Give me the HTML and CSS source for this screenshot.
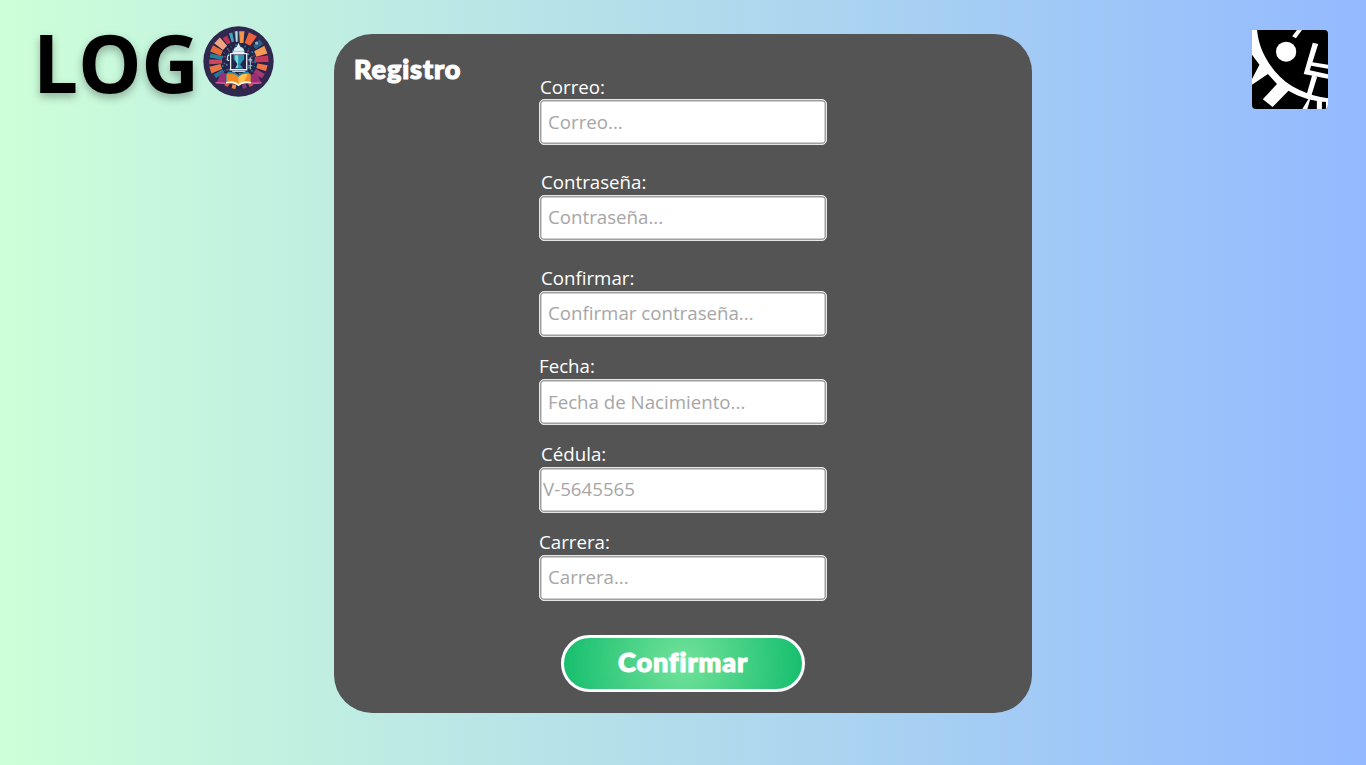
FILE: index.html
```html
<!DOCTYPE html>
<html lang="es">
<head>
<meta charset="utf-8">
<title>Registro</title>
<link rel="stylesheet" href="styles.css">
</head>
<body>
<header class="brand">
  <span class="brand-text">LOG</span>
  <svg class="emblem" viewBox="0 0 216 216" aria-hidden="true">
    <circle cx="108" cy="108" r="107" fill="#30284f"/>
    <circle cx="108" cy="108" r="86" fill="#242448"/>
    <g transform="translate(108 106)">
      <path d="M-12-90H-1V-58H-9z" fill="#3d9dba"/>
      <path d="M2-90H18L15-54H4z" fill="#f4934a"/>
      <path d="M-9-90H-4V-58H-7z" fill="#bce0df"/>
      <path d="M-13-92H14L10-57H-9z" fill="#eb633e" transform="rotate(28)"/>
      <path d="M-9-91H9L7-63H-7z" fill="#2b5c82" transform="rotate(50)"/>
      <path d="M-13-90H12L9-55H-9z" fill="#f39a56" transform="rotate(68)"/>
      <path d="M-10-91H10L8-50H-8z" fill="#c9365c" transform="rotate(86)"/>
      <path d="M-10-89H9L7-58H-7z" fill="#ef7547" transform="rotate(105)"/>
      <path d="M-9-89H8L7-58H-7z" fill="#a83773" transform="rotate(122)"/>
      <path d="M-7-88H4L2-60H-5z" fill="#49a0b5" transform="rotate(-15)"/>
      <path d="M-9-84H7L6-60H-6z" fill="#bd3456" transform="rotate(-29)"/>
      <path d="M-13-90H12L9-57H-9z" fill="#f0a57f" transform="rotate(-46)"/>
      <path d="M-11-90H10L8-56H-9z" fill="#e96b3c" transform="rotate(-65)"/>
      <path d="M-7-88H6L5-50H-6z" fill="#26809c" transform="rotate(-79)"/>
      <path d="M-7-89H7L6-50H-6z" fill="#cf4660" transform="rotate(-92)"/>
      <path d="M-11-90H10L8-55H-8z" fill="#e87543" transform="rotate(-108)"/>
      <path d="M-7-86H6L5-55H-6z" fill="#27769b" transform="rotate(-123)"/>
      <path d="M-6-86H6V-73H-6z" fill="#e65443" transform="rotate(153)"/>
      <path d="M-6-86H6V-73H-6z" fill="#8d3275" transform="rotate(167)"/>
      <path d="M-6-86H6V-73H-6z" fill="#f18a39" transform="rotate(190)"/>
      <path d="M-6-86H6V-73H-6z" fill="#e65443" transform="rotate(206)"/>
    </g>
    <g fill="none" stroke-width="5">
      <circle cx="108" cy="108" r="50" stroke="#287c9c" stroke-dasharray="5 9 2 12"/>
      <circle cx="108" cy="108" r="43" stroke="#b54669" stroke-dasharray="4 17"/>
      <circle cx="108" cy="108" r="37" stroke="#3b82a0" stroke-dasharray="6 11"/>
    </g>
    <path d="M56 141l-16 33 46 3V150zM163 141l14 32-40 5v-25z" fill="#9b2e76"/>
    <path d="M84 84v49h49V84z" fill="#242448" stroke="#e7f0f8" stroke-width="4"/>
    <path d="M80 90h-5v15h5M89 138h38" fill="none" stroke="#e7f0f8" stroke-width="3"/>
    <path d="M108 51l5 11 11 7v7H94v-7l9-7z" fill="#d7edf2"/>
    <rect x="90" y="77" width="36" height="9" rx="3" fill="#e8f2f5"/>
    <path d="M93 88h32v13l-12 15 9 13H97l8-13-12-15z" fill="#2995b3"/>
    <path d="M98 89h9v38h-8l6-11-7-15z" fill="#8ad6d9"/>
    <path d="M108 149q-14-11-32-10l-6 13v24q22-7 38 4 17-11 37-4v-24l-7-13q-16-1-30 10z" fill="#218eae"/>
    <path d="M72 145q24-3 36 10 13-13 37-10v29q-24-4-37 6-12-10-36-6z" fill="#f28b24"/>
    <path d="M108 155q12-12 28-8l-11 23-17 8z" fill="#ffc34e"/>
    <path d="M70 170q27-6 38 7 12-13 39-7v5q-26-4-39 8-12-12-38-8z" fill="#fff2df"/>
    <path d="M39 170l30 2v5l-32-3zM148 172l30-2v5l-30 3z" fill="#d65896"/>
    <path d="M144 95v37m-6-29h12m-12 18h12" stroke="#a7c5d7" stroke-width="3"/>
    <circle cx="144" cy="104" r="4" fill="none" stroke="#a7c5d7" stroke-width="2"/>
    <circle cx="163" cy="52" r="5" fill="#8aafcb"/>
  </svg>
</header>
<main class="card">
  <h1 class="title">Registro</h1>
  <form class="form">
    <label class="field"><span class="label label-near">Correo:</span><input class="input" placeholder="Correo..."></label>
    <label class="field field-wide"><span class="label">Contraseña:</span><input class="input input-raised" placeholder="Contraseña..."></label>
    <label class="field field-wide"><span class="label">Confirmar:</span><input class="input input-raised" placeholder="Confirmar contraseña..."></label>
    <label class="field"><span class="label label-flush">Fecha:</span><input class="input" placeholder="Fecha de Nacimiento..."></label>
    <label class="field"><span class="label">Cédula:</span><input class="input input-raised input-id" placeholder="V-5645565"></label>
    <label class="field"><span class="label label-flush">Carrera:</span><input class="input input-raised" placeholder="Carrera..."></label>
  </form>
  <button class="submit" type="button"><span class="submit-text">Confirmar</span></button>
</main>
<aside class="side">
  <svg class="badge" viewBox="38 30 225 237" preserveAspectRatio="none" aria-hidden="true">
    <defs><clipPath id="badge-shape"><path d="M38 30H252Q263 30 263 42V254Q263 267 250 267H50Q38 267 38 254Z"/></clipPath></defs>
    <g clip-path="url(#badge-shape)">
      <rect x="38" y="30" width="225" height="237"/>
      <path d="M38 30H53C57 75 75 116 105 153C145 203 205 226 263 235V246C220 244 178 232 146 212L99 261L70 238L112 192L85 162L38 194V177L60 134L38 104Z" fill="#fff"/>
      <circle cx="139" cy="95" r="30" fill="#fff"/>
      <path d="M171 30H186L168 55L157 49Z" fill="#fff"/>
      <path d="M218 68L234 72L217 127L263 134V146L213 137L209 151L263 163V176L191 162Z" fill="#fff"/>
      <path d="M216 166L231 170L214 226L202 267H187L205 237L200 223ZM230 235H245V267H230ZM257 235H263V267H257Z" fill="#fff"/>
    </g>
  </svg>
</aside>
</body>
</html>
```
FILE: styles.css
```css
* { box-sizing: border-box; }
body {
  margin: 0;
  height: 765px;
  overflow: hidden;
  display: grid;
  grid-template-columns: 334px 698px 334px;
  align-items: start;
  background: linear-gradient(90deg, #cdffd8, #94b9ff);
  font-family: "Open Sans", "Noto Sans", sans-serif;
}
.brand { display: flex; padding: 26px 0 0 33px; }
.brand-text {
  width: 170px;
  height: 71px;
  font-size: 80px;
  font-weight: 700;
  line-height: 71px;
  letter-spacing: -0.3px;
  color: #000;
  text-shadow: 0 4px 8px rgba(0, 0, 0, 0.3);
}
.emblem { width: 71px; height: 71px; flex: none; }
.card {
  margin-top: 34px;
  height: 679px;
  border-radius: 38px;
  background: #545454;
  display: flex;
  flex-direction: column;
  align-items: center;
}
.title {
  align-self: flex-start;
  margin: 17px 0 0 20px;
  height: 24px;
  font: 900 27px/36px Lato, sans-serif;
  letter-spacing: 0.9px;
  color: #fff;
  -webkit-text-stroke: 1.2px #fff;
}
.form { width: 288px; display: flex; flex-direction: column; gap: 18px; }
.field { display: flex; flex-direction: column; }
.field-wide { margin-top: 8px; }
.label {
  height: 24px;
  padding-left: 2px;
  font-size: 18.7px;
  line-height: 22px;
  color: #fff;
}
.label-near { padding-left: 1px; line-height: 24px; }
.label-flush { padding-left: 0; }
.input {
  width: 288px;
  height: 46px;
  padding: 0 8px 2px;
  border: 1px solid #e6e6e6;
  border-radius: 5px;
  background: #fff;
  box-shadow: inset 0 0 0 1.5px #a0a0a0;
  outline: 0;
  font: 18.7px "Open Sans", sans-serif;
}
.input::placeholder { color: #a6a6a6; opacity: 1; }
.input-raised { padding-bottom: 4px; }
.input-id { padding-left: 3px; }
.submit {
  margin-top: 34px;
  width: 244px;
  height: 57px;
  padding: 0 0 3px;
  border: 3px solid #fff;
  border-radius: 29px;
  background: radial-gradient(circle, #73e29a 0, #18bf6f 118px);
  color: #fff;
}
.submit-text {
  font: 900 27px/36px Lato, sans-serif;
  letter-spacing: 0.9px;
  -webkit-text-stroke: 1.2px #fff;
}
.side { display: flex; justify-content: flex-end; padding: 30px 38px 0 0; }
.badge { width: 76px; height: 79px; }
```
